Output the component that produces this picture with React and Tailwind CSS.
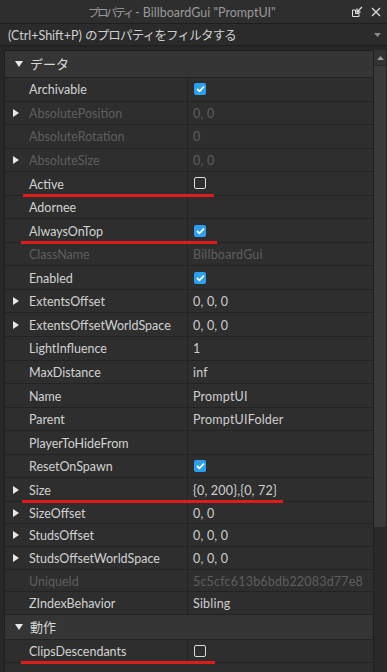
import React from 'react';

// プロパティ一覧のデータ
const rows = [
  { name: 'Archivable', check: true },
  { name: 'AbsolutePosition', value: '0, 0', exp: true, dis: true },
  { name: 'AbsoluteRotation', value: '0', dis: true },
  { name: 'AbsoluteSize', value: '0, 0', exp: true, dis: true },
  { name: 'Active', check: false, red: 'w-[191px] left-[18px]' },
  { name: 'Adornee', value: '' },
  { name: 'AlwaysOnTop', check: true, red: 'w-[196px] left-[16px]' },
  { name: 'ClassName', value: 'BillboardGui', dis: true },
  { name: 'Enabled', check: true },
  { name: 'ExtentsOffset', value: '0, 0, 0', exp: true },
  { name: 'ExtentsOffsetWorldSpace', value: '0, 0, 0', exp: true },
  { name: 'LightInfluence', value: '1' },
  { name: 'MaxDistance', value: 'inf' },
  { name: 'Name', value: 'PromptUI' },
  { name: 'Parent', value: 'PromptUIFolder' },
  { name: 'PlayerToHideFrom', value: '' },
  { name: 'ResetOnSpawn', check: true },
  { name: 'Size', value: '{0, 200},{0, 72}', exp: true, red: 'w-[261px] left-[17px]' },
  { name: 'SizeOffset', value: '0, 0', exp: true, short: true },
  { name: 'StudsOffset', value: '0, 0, 0', exp: true, short: true },
  { name: 'StudsOffsetWorldSpace', value: '0, 0, 0', exp: true, short: true },
  { name: 'UniqueId', value: '5c5cfc613b6bdb22083d77e8', dis: true, short: true },
  { name: 'ZIndexBehavior', value: 'Sibling', short: true },
];

const RightTri = () => (
  <svg width="6" height="8" viewBox="0 0 6 8" className="absolute left-[8px] top-1/2 -translate-y-1/2">
    <path d="M0 0 L6 4 L0 8 Z" fill="#e8e8e8" />
  </svg>
);

const DownTri = () => (
  <svg width="8" height="6" viewBox="0 0 8 6">
    <path d="M0 0 L8 0 L4 6 Z" fill="#e8e8e8" />
  </svg>
);

const CheckBox = ({ on }) =>
  on ? (
    <div className="w-[12px] h-[12px] rounded-[2px] bg-[#2b9ff0] flex items-center justify-center">
      <svg width="9" height="8" viewBox="0 0 9 8">
        <path d="M1 4 L3.5 6.3 L8 1.5" stroke="#fff" strokeWidth="1.8" fill="none" />
      </svg>
    </div>
  ) : (
    <div className="w-[12px] h-[12px] rounded-[2px] border-[1.5px] border-[#dcdcdc]" />
  );

const Header = ({ label, h }) => (
  <div className={`${h} shrink-0 flex items-center bg-[#353535] border-b border-[#232323]`}>
    <div className="w-[25px] flex justify-center pl-[2px]">
      <DownTri />
    </div>
    <span className="relative top-[1px] text-[#d8d8d8] text-[13px]">{label}</span>
  </div>
);

const Row = ({ r }) => (
  <div className={`relative ${r.short ? 'h-[22.6px]' : 'h-[23.56px]'} shrink-0 flex bg-[#2e2e2e] border-b border-[#232323]`}>
    <div className="relative w-[183px] shrink-0 border-r border-[#232323] flex items-center pl-[24px]">
      {r.exp && <RightTri />}
      <span className={`relative top-[1.5px] text-[12.5px] ${r.dis ? 'text-[#5e5e5e]' : 'text-[#d2d2d2]'}`}>{r.name}</span>
    </div>
    <div className="flex-1 flex items-center pl-[5px] overflow-hidden whitespace-nowrap">
      {r.check !== undefined ? (
        <div className="pl-[1px]"><CheckBox on={r.check} /></div>
      ) : (
        <span className={`relative top-[1.5px] text-[12.5px] tracking-[0.2px] ${r.dis ? 'text-[#5e5e5e]' : 'text-[#cfcfcf]'}`}>{r.value}</span>
      )}
    </div>
    {r.red && <div className={`absolute ${r.red} -bottom-[2px] h-[3px] bg-[#e01b1b] z-10`} />}
  </div>
);

export default function App() {
  return (
    <div
      className="w-[387px] h-[672px] overflow-hidden bg-[#272727] flex flex-col"
      style={{ fontFamily: 'Lato, "Noto Sans CJK JP", sans-serif' }}
    >
      {/* タイトルバー */}
      <div className="relative h-[24px] shrink-0 bg-[#2e2e2e] border-b border-[#1e1e1e] flex items-center pl-[88px]">
        <span className="relative top-[2px] text-[#9a9a9a] text-[12.5px] whitespace-nowrap">
          <span className="tracking-[-2.6px] text-[11.5px]">プロパティ</span>
          <span> - BillboardGui "PromptUI"</span>
        </span>
        <div className="absolute right-[6px] top-0 h-full flex items-center gap-[8px]">
          <svg width="11" height="11" viewBox="0 0 11 11">
            <path d="M0.5 4 V10.5 H7 V7.5 H3.5 V4 Z" stroke="#e0e0e0" strokeWidth="1" fill="none" />
            <path d="M10 1 L5 6 M5 2.5 V6 H8.5" stroke="#e0e0e0" strokeWidth="1.3" fill="none" />
          </svg>
          <svg width="10" height="10" viewBox="0 0 10 10">
            <path d="M1 1 L9 9 M9 1 L1 9" stroke="#d8d8d8" strokeWidth="1.4" />
          </svg>
        </div>
      </div>

      {/* フィルター */}
      <div className="h-[22px] shrink-0 bg-[#2b2b2b] border-b border-[#1e1e1e] flex items-center pl-[8px] pr-[6px]">
        <span className="relative top-[2px] flex-1 text-[#d0d0d0] text-[12.5px] whitespace-nowrap">
          (Ctrl+Shift+P) <span className="tracking-[-0.8px] text-[12.5px]">のプロパティをフィルタする</span>
        </span>
        <svg width="7" height="4" viewBox="0 0 7 4">
          <path d="M0 0 H7 L3.5 4 Z" fill="#8a8a8a" />
        </svg>
      </div>

      {/* プロパティ一覧 */}
      <div className="flex-1 flex mt-[4px] pl-[4px] min-h-0">
        <div className="flex-1 flex flex-col border-l border-t border-[#1f1f1f] overflow-hidden">
          <Header label="データ" h="h-[27px]" />
          {rows.map((r) => (
            <Row key={r.name} r={r} />
          ))}
          <Header label="動作" h="h-[25px]" />
          <Row r={{ name: 'ClipsDescendants', check: false, red: 'w-[194px] left-[16px]' }} />
          <div className="h-[24px] shrink-0 bg-[#2e2e2e]" />
        </div>

        {/* スクロールバー */}
        <div className="w-[13px] shrink-0 flex flex-col bg-[#292929] border-l border-[#1f1f1f] mr-[1px]">
          <div className="h-[15px] shrink-0 flex items-center justify-center bg-[#333333]">
            <svg width="7" height="4" viewBox="0 0 7 4">
              <path d="M0 4 H7 L3.5 0 Z" fill="#9a9a9a" />
            </svg>
          </div>
          <div className="h-[461px] shrink-0 mt-[1px] bg-[#3a3a3a]" />
        </div>
      </div>
    </div>
  );
}
